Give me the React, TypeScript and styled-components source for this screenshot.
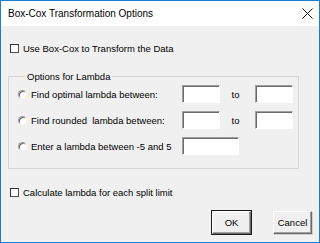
import React from 'react'
import styled, { createGlobalStyle } from 'styled-components'

const GlobalStyle = createGlobalStyle`
    html, body {
        margin: 0;
        padding: 0;
        background: #ffffff;
    }
`

const Window = styled.div`
    width: 320px;
    height: 243px;
    box-sizing: border-box;
    border: 1px solid #1a7fd4;
    display: flex;
    flex-direction: column;
    background: #f0f0f0;
    font-family: 'Liberation Sans', Arial, sans-serif;
    font-size: 9.5px;
    color: #000;
`

const TitleBar = styled.div`
    height: 25px;
    flex: none;
    background: #ffffff;
    display: flex;
    align-items: center;
    justify-content: space-between;
    padding: 0 6px 0 7px;
`

const Title = styled.span`
    font-family: 'Liberation Sans', Arial, sans-serif;
    font-size: 10px;
    color: #000;
`

const Body = styled.div`
    flex: 1;
    display: flex;
    flex-direction: column;
    padding: 16px 7px 0 9px;
`

const CheckRow = styled.label<{ $top?: number }>`
    display: flex;
    align-items: center;
    gap: 4px;
    height: 12px;
    margin-top: ${({ $top }) => $top ?? 0}px;
`

const CheckBox = styled.span`
    width: 9px;
    height: 9px;
    box-sizing: border-box;
    background: #fff;
    border: 1px solid #505050;
    border-top-color: #333;
    border-left-color: #333;
`

const Group = styled.fieldset`
    margin: 17px 13px 0 -2px;
    padding: 3px 4px 13px 9px;
    border: 1px solid #d5d5d5;
    display: grid;
    grid-template-columns: 164px 38px 35px 38px;
    grid-auto-rows: 18px;
    row-gap: 8px;
    align-items: center;
    min-width: 0;
`

const Legend = styled.legend`
    padding: 0 2px;
    margin-left: 7px;
    line-height: 11px;
`

const RadioLabel = styled.label`
    display: flex;
    align-items: center;
    gap: 4px;
`

const Radio = styled.span`
    width: 9px;
    height: 9px;
    box-sizing: border-box;
    border-radius: 50%;
    background: #fff;
    border: 1px solid;
    border-color: #9a9a9a #f6f6f6 #f6f6f6 #9a9a9a;
    box-shadow: inset 1px 1px 0 #6a6a6a;
`

const TextBox = styled.span<{ $span?: number }>`
    height: 18px;
    box-sizing: border-box;
    background: #fff;
    border: 1px solid;
    border-color: #a0a0a0 #fff #fff #a0a0a0;
    box-shadow: inset 1px 1px 0 #6b6b6b;
    grid-column: ${({ $span }) => ($span ? `span ${$span}` : 'auto')};
    width: ${({ $span }) => ($span ? '57px' : 'auto')};
`

const To = styled.span`
    text-align: center;
    padding-right: 4px;
`

const ButtonRow = styled.div`
    display: flex;
    justify-content: flex-end;
    gap: 22px;
    margin-top: 13px;
`

const Button = styled.button<{ $default?: boolean }>`
    width: 39px;
    height: 23px;
    box-sizing: border-box;
    padding: 0;
    font-family: 'Liberation Sans', Arial, sans-serif;
    font-size: 9.5px;
    color: #000;
    background: #f0f0f0;
    border: 1px solid;
    border-color: #ffffff #6a6a6a #6a6a6a #ffffff;
    box-shadow: ${({ $default }) =>
        $default
            ? '0 0 0 1px #1a1a1a, inset -1px -1px 0 #a0a0a0'
            : 'inset -1px -1px 0 #a0a0a0, 1px 1px 0 #d0d0d0'};
`

const CloseIcon = () => (
    <svg width="11" height="11" viewBox="0 0 11 11">
        <path d="M0.5 0.5 L10.5 10.5 M10.5 0.5 L0.5 10.5" stroke="#111" strokeWidth="1" />
    </svg>
)

export default function App() {
    return (
        <>
            <GlobalStyle />
            <Window>
                <TitleBar>
                    <Title>Box-Cox Transformation Options</Title>
                    <CloseIcon />
                </TitleBar>
                <Body>
                    <CheckRow>
                        <CheckBox />
                        Use Box-Cox to Transform the Data
                    </CheckRow>
                    <Group>
                        <Legend>Options for Lambda</Legend>
                        <RadioLabel>
                            <Radio />
                            Find optimal lambda between:
                        </RadioLabel>
                        <TextBox />
                        <To>to</To>
                        <TextBox />
                        <RadioLabel>
                            <Radio />
                            Find rounded&nbsp; lambda between:
                        </RadioLabel>
                        <TextBox />
                        <To>to</To>
                        <TextBox />
                        <RadioLabel>
                            <Radio />
                            Enter a lambda between -5 and 5
                        </RadioLabel>
                        <TextBox $span={3} />
                    </Group>
                    <CheckRow $top={17}>
                        <CheckBox />
                        Calculate lambda for each split limit
                    </CheckRow>
                    <ButtonRow>
                        <Button $default>OK</Button>
                        <Button>Cancel</Button>
                    </ButtonRow>
                </Body>
            </Window>
        </>
    )
}
